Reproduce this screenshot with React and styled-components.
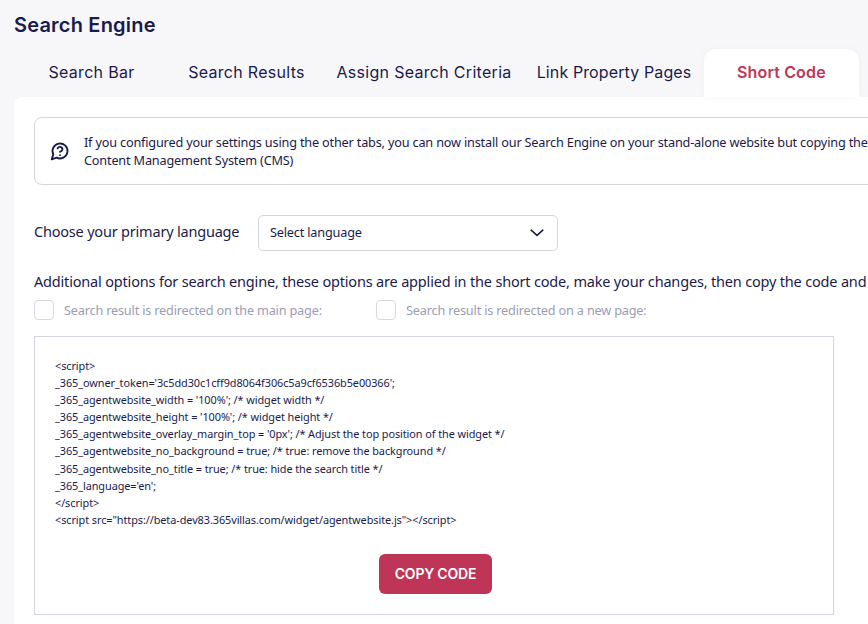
import React from "react";
import styled, { createGlobalStyle } from "styled-components";

const Global = createGlobalStyle`
  html, body { margin: 0; padding: 0; background: #f7f7fa; overflow: hidden; }
  #root { width: 868px; height: 624px; overflow: hidden; }
  * { box-sizing: border-box; }
`;
const Page = styled.div`
  width: 868px; height: 624px; overflow: hidden; background: #f7f7fa;
  padding: 12px 0 0 14px; color: #1b1b4b;
  font-family: "Noto Sans", sans-serif;
`;
const Title = styled.h1`
  margin: 0; height: 37px; font: 600 20px/27px "Inter", sans-serif; letter-spacing: 0.2px; color: #1b1b4b;
`;
const Tabs = styled.div`display: flex; height: 48px; width: 900px;`;
const Tab = styled.div`
  min-width: 155px; padding: 0 12.5px 2px; display: flex; align-items: center; justify-content: center;
  font: ${p => (p.$active ? 600 : 400)} 16px "Inter", sans-serif; white-space: nowrap;
  letter-spacing: ${p => p.$spacing || "0.3px"};
  color: ${p => (p.$active ? "#bf3557" : "#1b1b4b")};
  background: ${p => (p.$active ? "#fff" : "transparent")};
  box-shadow: ${p => (p.$active ? "0 0 8px rgba(27,27,75,.04)" : "none")};
  border-radius: 12px 12px 0 0;
`;
const Panel = styled.div`
  width: 1000px; height: 560px; background: #fff; border-radius: 8px 0 0 0; padding: 20px;
`;
const Info = styled.div`
  width: 960px; height: 68px; border: 1px solid #d5d5df; border-radius: 8px;
  display: flex; align-items: center; gap: 14px; padding: 0 0 0 15px;
  font-size: 12.7px; line-height: 18px; letter-spacing: -0.18px;
`;
const InfoText = styled.div`white-space: pre;`;
const Row = styled.div`display: flex; align-items: center; gap: 19px; margin-top: 30px; height: 36px;`;
const Label = styled.span`font-size: 14.5px; letter-spacing: -0.2px; width: 205px; white-space: nowrap; margin-top: -5px;`;
const Select = styled.div`
  width: 300px; height: 36px; border: 1px solid #d5d5df; border-radius: 5px; display: flex;
  align-items: center; justify-content: space-between; padding: 0 13px 0 11px; font-size: 12.7px; letter-spacing: -0.18px;
`;
const SelectText = styled.span`margin-top: -2px;`;
const Additional = styled.div`margin-top: 20px; font-size: 14.5px; letter-spacing: -0.18px; line-height: 20px; white-space: nowrap;`;
const Options = styled.div`display: flex; margin-top: 9px; height: 20px; align-items: center;`;
const Option = styled.label`
  display: flex; align-items: center; gap: 10px; width: 342px; font-size: 12.7px; letter-spacing: -0.18px; color: #9c9cb2;
`;
const Check = styled.span`width: 20px; height: 20px; border: 1px solid #d8d8e2; border-radius: 4px;`;
const CodeBox = styled.div`
  width: 800px; height: 279px; margin-top: 16px; border: 1px solid #d5d5df; padding: 20px 17px 0 20px;
  display: flex; flex-direction: column;
`;
const Code = styled.div`font-size: 10.9px; letter-spacing: -0.08px; line-height: 17.1px; color: #1b1b4b; white-space: pre;`;
const CopyButton = styled.button`
  align-self: center; margin-top: 26px; width: 113px; height: 40px; border: 0; border-radius: 6px;
  background: #bf3557; color: #fff; font: 600 14px "Inter", sans-serif; letter-spacing: -0.2px;
`;

const code = `<script>
_365_owner_token='3c5dd30c1cff9d8064f306c5a9cf6536b5e00366';
_365_agentwebsite_width = '100%'; /* widget width */
_365_agentwebsite_height = '100%'; /* widget height */
_365_agentwebsite_overlay_margin_top = '0px'; /* Adjust the top position of the widget */
_365_agentwebsite_no_background = true; /* true: remove the background */
_365_agentwebsite_no_title = true; /* true: hide the search title */
_365_language='en';
</script>
<script src="https://beta-dev83.365villas.com/widget/agentwebsite.js"></script>`;

export default function App() {
  return (
    <Page>
      <Global />
      <Title>Search Engine</Title>
      <Tabs>
        <Tab>Search Bar</Tab>
        <Tab>Search Results</Tab>
        <Tab>Assign Search Criteria</Tab>
        <Tab $spacing="0.12px">Link Property Pages</Tab>
        <Tab $active $spacing="0.15px">Short Code</Tab>
      </Tabs>
      <Panel>
        <Info>
          <svg width="20" height="20" viewBox="0 0 24 24" fill="none" stroke="#1b1b4b" strokeWidth="2.2" strokeLinecap="round" strokeLinejoin="round">
            <path d="M7.9 20A9 9 0 1 0 4 16.1L2 22Z" />
            <path d="M9.09 9a3 3 0 0 1 5.83 1c0 2-3 3-3 3" />
            <path d="M12 17h.01" />
          </svg>
          <InfoText>{"If you configured your settings using the other tabs, you can now install our Search Engine on your stand-alone website but copying the code below\nContent Management System (CMS)"}</InfoText>
        </Info>
        <Row>
          <Label>Choose your primary language</Label>
          <Select>
            <SelectText>Select language</SelectText>
            <svg width="14" height="8" viewBox="0 0 14 8" fill="none" stroke="#1b1b4b" strokeWidth="1.6" strokeLinecap="round" strokeLinejoin="round">
              <path d="M1.2 1.2 7 6.4l5.8-5.2" />
            </svg>
          </Select>
        </Row>
        <Additional>Additional options for search engine, these options are applied in the short code, make your changes, then copy the code and paste it on your website</Additional>
        <Options>
          <Option><Check />Search result is redirected on the main page:</Option>
          <Option><Check />Search result is redirected on a new page:</Option>
        </Options>
        <CodeBox>
          <Code>{code}</Code>
          <CopyButton>COPY CODE</CopyButton>
        </CodeBox>
      </Panel>
    </Page>
  );
}
